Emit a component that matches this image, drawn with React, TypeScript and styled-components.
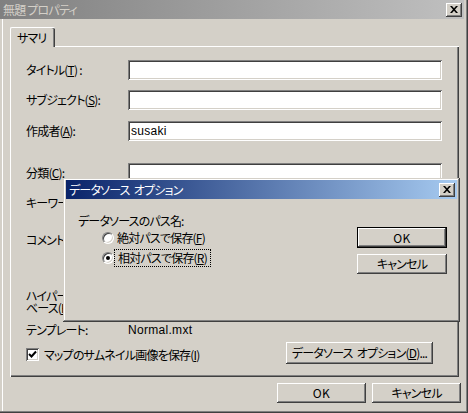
import React from "react";
import styled, { createGlobalStyle, css } from "styled-components";

const Global = createGlobalStyle`
  html, body { margin: 0; padding: 0; background: #d4d0c8; }
  body {
    font-family: "Noto Sans CJK JP", "Noto Sans", sans-serif;
    font-size: 12px;
    color: #000;
    font-feature-settings: "palt";
    letter-spacing: -0.8px;
    line-height: 1;
  }
  * { box-sizing: border-box; }
`;

const raised = css`
  box-shadow: inset -1px -1px #404040, inset 1px 1px #fff, inset -2px -2px #808080, inset 2px 2px #d4d0c8;
`;
const sunken = css`
  box-shadow: inset 1px 1px #808080, inset -1px -1px #fff, inset 2px 2px #404040, inset -2px -2px #d4d0c8;
`;

const Window = styled.div`
  position: relative;
  width: 468px;
  height: 413px;
  background: #d4d0c8;
  box-shadow: inset -1px -1px #404040, inset -2px -2px #808080, inset 2px 0 #d4d0c8, inset 3px 0 #fff;
  display: flex;
  flex-direction: column;
`;

const TitleBar = styled.div<{ $active?: boolean }>`
  height: 19px;
  flex: none;
  display: flex;
  align-items: center;
  justify-content: space-between;
  padding: 0 2px 0 3px;
  background: ${(p) =>
    p.$active ? "linear-gradient(to right, #0a246a, #a6caf0)" : "linear-gradient(to right, #808080, #c0c0c0)"};
  color: ${(p) => (p.$active ? "#fff" : "#d4d0c8")};
  font-size: 12px;
`;

const MainTitle = styled(TitleBar)`
  margin-right: 4px;
`;

const CloseBtn = styled.div`
  width: 16px;
  height: 14px;
  display: flex;
  align-items: center;
  justify-content: center;
  background: #d4d0c8;
  ${raised}
`;

const CloseGlyph = () => (
  <svg width="8" height="7" viewBox="0 0 8 7">
    <path d="M0 0h2l2 2.2L6 0h2L5 3.5 8 7H6L4 4.8 2 7H0l3-3.5z" fill="#000" />
  </svg>
);

const Body = styled.div`
  flex: 1;
  display: flex;
  flex-direction: column;
  padding: 8px 7px 0 10px;
`;

const TabStrip = styled.div`
  display: flex;
  height: 19px;
`;

const Tab = styled.div`
  position: relative;
  z-index: 1;
  width: 45px;
  height: 20px;
  background: #d4d0c8;
  border-left: 1px solid #fff;
  border-top: 1px solid #fff;
  border-radius: 2px 2px 0 0;
  box-shadow: inset -1px 0 #404040, inset -2px 0 #808080;
  padding: 4px 0 0 6px;
`;

const Panel = styled.div`
  width: 449px;
  height: 331px;
  border-left: 1px solid #fff;
  border-top: 1px solid #fff;
  box-shadow: inset -1px -1px #404040, inset -2px -2px #808080;
  padding: 13px 0 0 15px;
  display: flex;
  flex-direction: column;
`;

const Row = styled.div<{ $mt?: number; $h?: number; $top?: boolean }>`
  display: grid;
  grid-template-columns: 102px 314px;
  align-items: ${(p) => (p.$top ? "start" : "center")};
  margin-top: ${(p) => p.$mt ?? 0}px;
  height: ${(p) => p.$h ?? 20}px;
`;

const Label = styled.div<{ $pt?: number }>`
  white-space: nowrap;
  padding-top: ${(p) => p.$pt ?? 0}px;
  line-height: 12px;
`;

const TwoLineLabel = styled.div`
  line-height: 12px;
  white-space: nowrap;
`;

const latin = css`
  font-family: "Liberation Sans", "Noto Sans CJK JP", sans-serif;
  font-size: 12px;
  letter-spacing: 0.3px;
`;

const Field = styled.div<{ $h?: number }>`
  height: ${(p) => p.$h ?? 20}px;
  background: #fff;
  ${sunken}
  padding: 4px 3px 0 3px;
  ${latin}
`;

const Value = styled.div`
  ${latin}
`;

const U = styled.span`
  text-decoration: underline;
  text-underline-offset: 1px;
`;

const Gap = styled.span`
  display: inline-block;
  width: 4px;
`;

const CheckRow = styled.div`
  margin-top: 5px;
  width: 416px;
  display: flex;
  align-items: center;
  justify-content: space-between;
  padding-right: 9px;
`;

const CheckLabel = styled.label`
  display: flex;
  align-items: center;
  gap: 5px;
  margin-top: 3px;
`;

const CheckBox = styled.div`
  width: 13px;
  height: 13px;
  background: #fff;
  ${sunken}
  display: flex;
  align-items: center;
  justify-content: center;
`;

const Button = styled.div<{ $w: number; $h?: number; $default?: boolean; $latin?: boolean }>`
  width: ${(p) => p.$w}px;
  height: ${(p) => p.$h ?? 22}px;
  display: flex;
  align-items: center;
  justify-content: center;
  background: #d4d0c8;
  ${(p) =>
    p.$default
      ? css`
          box-shadow: inset 0 0 0 1px #000, inset -2px -2px #404040, inset 2px 2px #fff, inset -3px -3px #808080;
        `
      : raised}
  ${(p) => (p.$latin ? "letter-spacing: 0.5px;" : "")}
  white-space: nowrap;
`;

const Footer = styled.div`
  display: flex;
  justify-content: flex-end;
  gap: 6px;
  margin-top: 6px;
`;

/* sub dialog (overlay) */
const Dialog = styled.div`
  position: absolute;
  left: 63px;
  top: 178px;
  width: 397px;
  height: 144px;
  background: #d4d0c8;
  box-shadow: inset -1px -1px #404040, inset 1px 1px #d4d0c8, inset -2px -2px #808080, inset 2px 2px #fff;
  padding: 2px 3px 3px 3px;
  display: flex;
  flex-direction: column;
  z-index: 5;
`;

const DialogContent = styled.div`
  flex: 1;
  display: flex;
  justify-content: space-between;
  padding: 15px 10px 0 12px;
`;

const OptionCol = styled.div`
  display: flex;
  flex-direction: column;
`;

const OptionHead = styled.div`
  height: 16px;
  line-height: 14px;
`;

const RadioRow = styled.div<{ $mt?: number }>`
  display: flex;
  align-items: center;
  height: 16px;
  margin-top: ${(p) => p.$mt ?? 0}px;
  padding-left: 24px;
  gap: 3px;
`;

const RadioDot = styled.div<{ $on?: boolean }>`
  width: 12px;
  height: 12px;
  border-radius: 50%;
  background: #fff;
  border: 1px solid;
  border-color: #808080 #fff #fff #808080;
  box-shadow: inset 1px 1px #404040, inset -1px -1px #d4d0c8;
  display: flex;
  align-items: center;
  justify-content: center;
  &::after {
    content: "";
    width: 4px;
    height: 4px;
    border-radius: 50%;
    background: ${(p) => (p.$on ? "#000" : "transparent")};
  }
`;

const Focus = styled.span`
  outline: 1px dotted #000;
  outline-offset: 2px;
  padding: 0 1px;
`;

const ButtonCol = styled.div`
  display: flex;
  flex-direction: column;
  gap: 6px;
  padding-top: 13px;
`;

export default function App() {
  return (
    <>
      <Global />
      <Window>
        <MainTitle>
          <span>無題 プロパティ</span>
          <CloseBtn>
            <CloseGlyph />
          </CloseBtn>
        </MainTitle>
        <Body>
          <TabStrip>
            <Tab>サマリ</Tab>
          </TabStrip>
          <Panel>
            <Row>
              <Label>
                タイトル(<U>T</U>) :
              </Label>
              <Field />
            </Row>
            <Row $mt={10}>
              <Label>
                サブジェクト(<U>S</U>):
              </Label>
              <Field />
            </Row>
            <Row $mt={11}>
              <Label>
                作成者(<U>A</U>):
              </Label>
              <Field>susaki</Field>
            </Row>
            <Row $mt={22}>
              <Label>
                分類(<U>C</U>):
              </Label>
              <Field />
            </Row>
            <Row $mt={10}>
              <Label>
                キーワード(<U>K</U>):
              </Label>
              <Field />
            </Row>
            <Row $mt={10} $h={60} $top>
              <Label $pt={11}>
                コメント(<U>M</U>):
              </Label>
              <Field $h={60} />
            </Row>
            <Row $mt={7} $h={24}>
              <TwoLineLabel>
                ハイパーリンク
                <br />
                ベース(<U>H</U>):
              </TwoLineLabel>
              <Field />
            </Row>
            <Row $mt={9} $h={14}>
              <Label>テンプレート:</Label>
              <Value>Normal.mxt</Value>
            </Row>
            <CheckRow>
              <CheckLabel>
                <CheckBox>
                  <svg width="9" height="9" viewBox="0 0 9 9">
                    <path d="M1 4l2.5 2.5L8 1.5" stroke="#000" strokeWidth="2" fill="none" />
                  </svg>
                </CheckBox>
                <span>
                  マップのサムネイル画像を保存(<U>I</U>)
                </span>
              </CheckLabel>
              <Button $w={147}>
                データソース<Gap />オプション(<U>D</U>)...
              </Button>
            </CheckRow>
          </Panel>
          <Footer>
            <Button $w={89} $h={20} $latin>
              OK
            </Button>
            <Button $w={89} $h={20}>
              キャンセル
            </Button>
          </Footer>
        </Body>

        <Dialog>
          <TitleBar $active>
            <span>
              データソース<Gap />オプション
            </span>
            <CloseBtn>
              <CloseGlyph />
            </CloseBtn>
          </TitleBar>
          <DialogContent>
            <OptionCol>
              <OptionHead>データソースのパス名:</OptionHead>
              <RadioRow>
                <RadioDot />
                <span>
                  絶対パスで保存(<U>F</U>)
                </span>
              </RadioRow>
              <RadioRow $mt={4}>
                <RadioDot $on />
                <Focus>
                  相対パスで保存(<U>R</U>)
                </Focus>
              </RadioRow>
            </OptionCol>
            <ButtonCol>
              <Button $w={90} $h={21} $default $latin>
                OK
              </Button>
              <Button $w={90} $h={20}>
                キャンセル
              </Button>
            </ButtonCol>
          </DialogContent>
        </Dialog>
      </Window>
    </>
  );
}
